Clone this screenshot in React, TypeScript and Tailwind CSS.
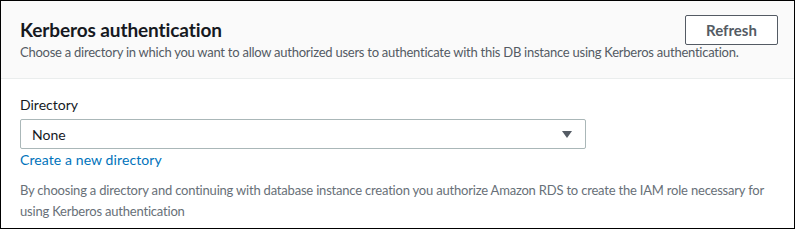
const font = { fontFamily: "Lato, 'Liberation Sans', sans-serif" };

function Caret() {
  return (
    <svg width="10" height="7" viewBox="0 0 10 7" className="shrink-0">
      <path d="M0 0 H10 L5 7 Z" fill="#545b64" />
    </svg>
  );
}

export default function App() {
  return (
    <div className="w-[795px] h-[229px] border border-black bg-white" style={font}>
      <div className="bg-[#fafafa] border-b border-[#eaeded] pl-[19px] pr-[16px] pt-[14px] pb-[16px]">
        <div className="flex items-center justify-between">
          <h2 className="text-[19px] leading-[24px] font-bold text-[#16191f] tracking-[-0.1px]">Kerberos authentication</h2>
          <button className="w-[93px] h-[30px] border border-[#545b64] rounded-[2px] bg-white text-[15px] font-bold text-[#545b64]">
            Refresh
          </button>
        </div>
        <p className="-mt-[3px] text-[13px] leading-[20px] tracking-[-0.25px] text-[#545b64] whitespace-nowrap">
          Choose a directory in which you want to allow authorized users to authenticate with this DB instance using Kerberos authentication.
        </p>
      </div>
      <div className="pl-[19px] pt-[16px]">
        <label className="block text-[14px] leading-[20px] text-[#16191f]">Directory</label>
        <div className="mt-[4px] w-[566px] h-[30px] border border-[#aab7b8] rounded-[2px] flex items-center justify-between pl-[11px] pr-[13px]">
          <span className="text-[14px] text-[#16191f]">None</span>
          <Caret />
        </div>
        <a className="block mt-[1px] text-[14px] leading-[20px] tracking-[0.1px] text-[#0073bb]">Create a new directory</a>
        <p className="mt-[10px] w-[760px] text-[13px] leading-[21px] tracking-[-0.2px] text-[#687078]">
          By choosing a directory and continuing with database instance creation you authorize Amazon RDS to create the IAM role necessary for using Kerberos authentication
        </p>
      </div>
    </div>
  );
}
